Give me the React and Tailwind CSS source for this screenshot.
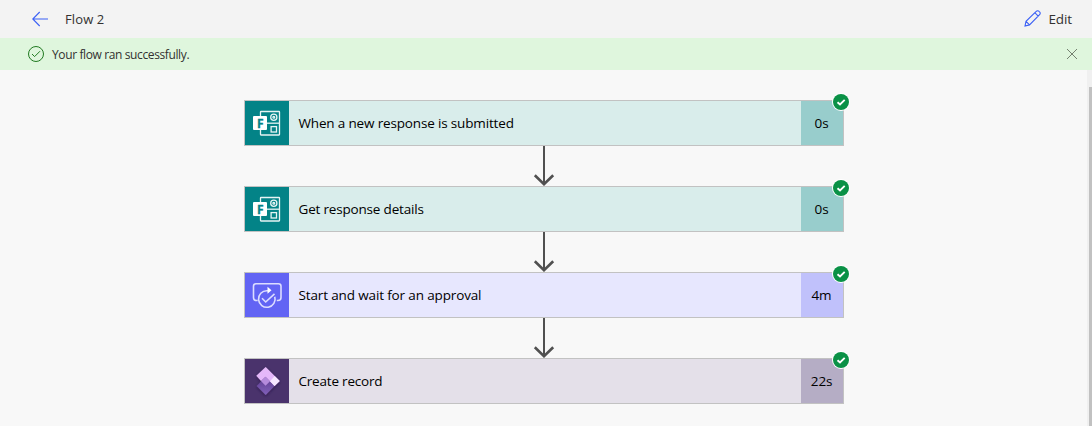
import React from "react";

function FormsIcon() {
  return (
    <svg width="44" height="44" viewBox="0 0 44 44" fill="none" stroke="#e6f4f4" strokeWidth="1.3">
      <rect x="15.5" y="10.5" width="19" height="23.5" rx="0.5" />
      <path d="M22 22.2h12.5" />
      <circle cx="28.8" cy="16.2" r="3.1" />
      <circle cx="28.8" cy="16.2" r="0.9" />
      <rect x="26.1" y="25.6" width="5.4" height="5.4" />
      <rect x="8" y="15" width="14" height="14" rx="1" fill="#fff" stroke="none" />
      <text x="15.4" y="26.5" fill="#038387" stroke="#038387" strokeWidth="0.3" textAnchor="middle" className="font-['Open_Sans',sans-serif] text-[12px] font-bold">F</text>
    </svg>
  );
}

function ApprovalIcon() {
  return (
    <svg width="44" height="44" viewBox="0 0 44 44" fill="none" stroke="#dcddff" strokeWidth="1.6">
      <path d="M12.7 27.5h-1.2a3 3 0 0 1-3-3V13.2a2.5 2.5 0 0 1 2.5-2.500h22.500a2.500 2.500 0 0 1 2.500 2.500V24.500a3 3 0 0 1-3 3h-1.200" />
      <path d="M24.500 17.700h-2.500a8.300 8.300 0 1 0 7.800 6" />
      <path d="M22.500 13.800v7l4-3.500z" fill="#fff" stroke="none" />
      <path d="M17 25.300l3.700 3.700 8.800-8.200" />
    </svg>
  );
}

function DataverseIcon() {
  return (
    <svg width="44" height="44" viewBox="0 0 44 44">
      <defs>
        <linearGradient id="top" x1="0" y1="0" x2="0.4" y2="1">
          <stop stopColor="#e6baf8" /><stop offset="1" stopColor="#e3b5fb" />
        </linearGradient>
        <linearGradient id="low" x1="0" y1="0" x2="0" y2="1">
          <stop stopColor="#5c3d8e" /><stop offset="1" stopColor="#8160ba" />
        </linearGradient>
        <filter id="shade" x="-30%" y="-30%" width="160%" height="160%">
          <feDropShadow dx="0" dy="1" stdDeviation="1.5" floodColor="#1d0d38" floodOpacity="0.6" />
        </filter>
      </defs>
      <g filter="url(#shade)">
        <path d="M20.5 17.700l9 9.300-8.800 9-9-8.900z" fill="url(#low)" />
        <path d="M20.700 8l14 14-5.200 5-9-9.300-4.400 4.300-4.800-5.200z" fill="url(#top)" />
      </g>
      <path d="M20.500 17.700l4.500 4.500-4.500 4.600-4.500-4.800z" fill="#b58bdc" />
      <path d="M29.700 17l5 5-5.200 5-4.500-4.800z" fill="#f6e7ff" />
    </svg>
  );
}

const steps = [
  { label: "When a new response is submitted", time: "0s", Icon: FormsIcon, icon: "bg-[#038387]", body: "bg-[#d9edeb]", end: "bg-[#98cdcc]", spacing: "tracking-[-0.160px]" },
  { label: "Get response details", time: "0s", Icon: FormsIcon, icon: "bg-[#038387]", body: "bg-[#d9edeb]", end: "bg-[#98cdcc]", spacing: "tracking-[-0.180px]" },
  { label: "Start and wait for an approval", time: "4m", Icon: ApprovalIcon, icon: "bg-[#6264f4]", body: "bg-[#e7e7fe]", end: "bg-[#c0c1fb]", spacing: "tracking-[-0.140px]" },
  { label: "Create record", time: "22s", Icon: DataverseIcon, icon: "bg-[#4a336c]", body: "bg-[#e4e0e9]", end: "bg-[#b5adc5]", spacing: "tracking-[-0.200px]" },
];

function Step({ label, time, Icon, icon, body, end, spacing }) {
  return (
    <div className="relative flex h-[46px] w-[600px] border border-[#c2c2c2]">
      <div className={"w-11 shrink-0 " + icon}><Icon /></div>
      <div className={"flex flex-1 items-center pl-[9.500px] " + body}>
        <span className={"whitespace-nowrap text-[13.500px] text-black " + spacing}>{label}</span>
      </div>
      <div className={"flex w-[42px] items-center justify-center pr-px text-[13.500px] tracking-[-0.200px] text-black " + end}>{time}</div>
      <svg className="absolute -right-[7px] -top-[8px]" width="18" height="18" viewBox="0 0 18 18">
        <circle cx="9" cy="9" r="9" fill="#fff" />
        <circle cx="9" cy="9" r="8" fill="#0a9146" />
        <path d="M5.500 9.200l2.500 2.300 4.700-4.700" fill="none" stroke="#fff" strokeWidth="1.900" />
      </svg>
    </div>
  );
}

function Arrow() {
  return (
    <svg width="24" height="40" viewBox="0 0 24 40" fill="none" stroke="#505050" strokeWidth="2">
      <path d="M12 0v38" />
      <path d="M2.800 29.200l9.200 9 9.200-9" strokeWidth="2.600" />
    </svg>
  );
}

export default function App() {
  return (
    <div className="flex h-[426px] w-[1092px] flex-col overflow-hidden bg-[#f8f8f8] font-['Open_Sans','Noto_Sans',sans-serif]">
      <header className="flex h-[38px] shrink-0 items-center bg-[#f3f3f3] pl-8 pr-5 text-[13px] text-[#323130]">
        <svg className="-mt-px" width="16" height="16" viewBox="0 0 16 16" fill="none" stroke="#3b60f5" strokeWidth="1.100">
          <path d="M16 8H1M7.700 1L.8 8l6.900 7" />
        </svg>
        <span className="ml-[17px] pt-[2px] tracking-[0.120px]">Flow 2</span>
        <button className="ml-auto flex items-center gap-[7px]">
          <svg className="-mt-[2px]" width="17" height="17" viewBox="0 0 17 17" fill="none" stroke="#3b60f5" strokeWidth="1.100">
            <path d="M1 16l1-4.600L12.200 1.300a2 2 0 0 1 2.900 0l.5.500a2 2 0 0 1 0 2.900L5.500 14.900zM2 11.400l3.500 3.500M10.800 2.700l3.400 3.400" />
          </svg>
          <span className="text-[13.500px] tracking-[-0.100px]">Edit</span>
        </button>
      </header>
      <div className="flex h-8 shrink-0 items-center bg-[#dff6dd] pl-7 pr-[14px] text-[12px] text-[#323130]">
        <svg width="16" height="16" viewBox="0 0 16 16" fill="none" stroke="#217a21">
          <circle cx="8" cy="8" r="7.500" /><path d="M4 8l2.600 2.600L12 5.200" />
        </svg>
        <span className="ml-2 pt-[2px] tracking-[-0.380px]">Your flow ran successfully.</span>
        <svg className="ml-auto" width="12" height="12" viewBox="0 0 12 12" fill="none" stroke="#74806f">
          <path d="M1 1l10 10M11 1L1 11" />
        </svg>
      </div>
      <div className="flex min-h-0 flex-1">
        <main className="flex flex-1 flex-col items-center pl-[1px] pt-[30px]">
          {steps.map((s, i) => (
            <React.Fragment key={s.label}>
              {i > 0 && <Arrow />}
              <Step {...s} />
            </React.Fragment>
          ))}
        </main>
        <div className="w-[5px] bg-[#f0f0f0] pl-[2px] pt-[17px]"><div className="h-full bg-[#c1c1c1]" /></div>
      </div>
    </div>
  );
}
